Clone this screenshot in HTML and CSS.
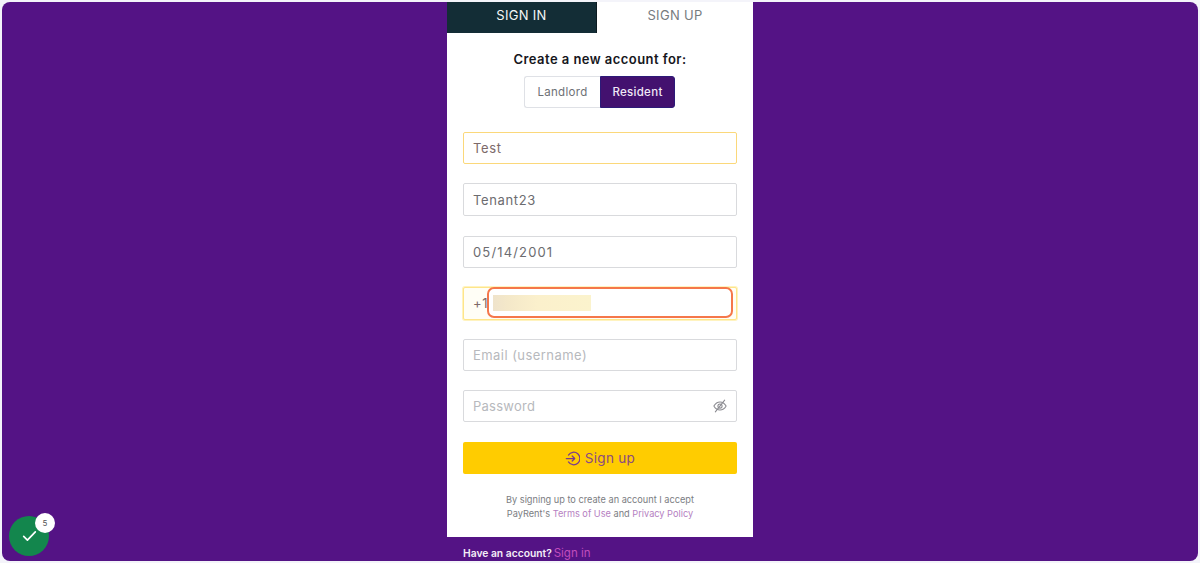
FILE: index.html
```html
<!DOCTYPE html>
<html lang="en">
<head>
<meta charset="utf-8">
<title>PayRent Sign up</title>
<link rel="stylesheet" href="styles.css">
</head>
<body>
<div class="panel">
  <main class="card">
    <nav class="tabs">
      <div class="tab tab-active">SIGN IN</div>
      <div class="tab">SIGN UP</div>
    </nav>
    <section class="body">
      <h1 class="title">Create a new account for:</h1>
      <div class="toggle">
        <div class="opt">Landlord</div>
        <div class="opt opt-on">Resident</div>
      </div>
      <form class="fields">
        <div class="field field-auto"><span class="val">Test</span></div>
        <div class="field"><span class="val">Tenant23</span></div>
        <div class="field"><span class="val val-date">05/14/2001</span></div>
        <div class="field field-auto field-phone">
          <span class="val">+1</span>
          <span class="blur"></span>
          <span class="mark"></span>
        </div>
        <div class="field"><span class="ph ph-email">Email (username)</span></div>
        <div class="field field-pw">
          <span class="ph">Password</span>
          <svg class="eye" width="14" height="14" viewBox="0 0 24 24" fill="none" stroke="#8a8a90" stroke-width="1.8" stroke-linecap="round" stroke-linejoin="round">
            <path d="M1.5 12S5.5 5 12 5s10.500 7 10.500 7-4 7-10.500 7S1.500 12 1.500 12Z"/>
            <circle cx="12" cy="12" r="3.600"/>
            <path d="M4 22 20 2"/>
          </svg>
        </div>
        <button class="submit" type="button">
          <svg width="15" height="15" viewBox="0 0 24 24" fill="none" stroke="#7a3b8c" stroke-width="2" stroke-linecap="round" stroke-linejoin="round">
            <path d="M5.500 6.500A10 10 0 1 1 5.500 17.500"/>
            <path d="M2 12h13"/>
            <path d="M11.500 8l4 4-4 4"/>
          </svg>
          <span>Sign up</span>
        </button>
      </form>
      <p class="terms">By signing up to create an account I accept<br>PayRent's <a class="link">Terms of Use</a> and <a class="link">Privacy Policy</a></p>
    </section>
  </main>
  <p class="have"><b>Have an account?</b> <a class="signin">Sign in</a></p>
  <div class="badge">
    <svg width="15" height="12" viewBox="0 0 18 14" fill="none" stroke="#fff" stroke-width="2" stroke-linecap="round" stroke-linejoin="round"><path d="M2 7.500 6.500 12 16 2"/></svg>
    <span class="count">5</span>
  </div>
</div>
</body>
</html>
```
FILE: styles.css
```css
* { box-sizing: border-box; }
html, body { margin: 0; height: 100%; }
body {
  padding: 2px;
  background: #f4f4fa;
  font-family: "Inter", "Open Sans", sans-serif;
  overflow: hidden;
}
.panel {
  position: relative;
  height: 559px;
  background: #541385;
  border-radius: 8px;
  overflow: hidden;
  display: flex;
  flex-direction: column;
  align-items: center;
}
.card {
  width: 306px;
  height: 535px;
  background: #fff;
  flex: none;
}
.tabs { display: flex; height: 31px; }
.tab {
  flex: 1;
  display: flex;
  align-items: center;
  justify-content: center;
  font-size: 13px;
  letter-spacing: .3px;
  padding-bottom: 5px;
  color: #777c80;
}
.tab-active {
  flex: none;
  width: 150px;
  background: #132d36;
  color: #f4f7f7;
  border-right: 1px solid #0c1a20;
}
.body { padding: 0 16px; display: flex; flex-direction: column; align-items: center; }
.title {
  margin: 18px 0 0;
  font-size: 13px;
  line-height: 16px;
  font-weight: 600;
  letter-spacing: .45px;
  color: #16161c;
}
.toggle {
  display: flex;
  margin: 9px 1px 0 0;
  height: 32px;
  width: 151px;
  font-size: 11.500px;
  letter-spacing: .3px;
}
.opt {
  flex: 1;
  display: flex;
  align-items: center;
  justify-content: center;
  color: #6e7176;
  border: 1px solid #dfe1e6;
  border-right: 0;
  border-radius: 3px 0 0 3px;
}
.opt-on {
  flex: none;
  width: 75px;
  background: #43116f;
  color: #f0e9f6;
  font-weight: 500;
  border: 1px solid #2c1a78;
  border-radius: 0 3px 3px 0;
}
.fields {
  width: 100%;
  margin-top: 24px;
  display: grid;
  grid-template-rows: 32px 33px 32px 33px 32px 32px 32px;
  row-gap: 19.250px;
}
.field {
  position: relative;
  display: flex;
  align-items: center;
  padding: 0 9px;
  border: 1px solid #d9dadd;
  border-radius: 2px;
  font-size: 13px;
}
.field-auto { border-color: #fbd87a; }
.val { color: #6c6c70; letter-spacing: .65px; }
.val-date { letter-spacing: 1.150px; }
.field-auto > .val:first-child { color: #7d6a6a; }
.ph { color: #b7b9bd; letter-spacing: .25px; }
.ph-email { letter-spacing: .45px; }
.field-phone { background: #fffef6; border-color: #fee58a; box-shadow: 0 0 0 1px #fff3bf; }
.field-pw { justify-content: space-between; padding-right: 9px; }
.blur {
  position: absolute;
  left: 29px;
  top: 7px;
  width: 98px;
  height: 16px;
  background: linear-gradient(90deg, #efe3cb 0, #f4e8c9 15%, #fbf0cc 45%, #fbf3cd 100%);
  z-index: 2;
}
.mark {
  position: absolute;
  left: 23px;
  top: -1px;
  width: 246px;
  height: 31px;
  background: #fff;
  border: 2px solid #f5774a;
  border-radius: 7px;
  z-index: 1;
}
.submit {
  margin: 0;
  height: 32px;
  border: 0;
  border-radius: 2px;
  background: #ffcc00;
  display: flex;
  align-items: center;
  justify-content: center;
  gap: 5px;
  padding: 1px 0 0;
  font: inherit;
  font-size: 13.500px;
  letter-spacing: .3px;
  color: #8a4a82;
}
.terms {
  margin: 19px 0 0;
  font-size: 9.200px;
  line-height: 14px;
  text-align: center;
  color: #7b7d82;
}
.link { color: #b67fc2; }
.have {
  width: 306px;
  margin: 8px 0 0;
  padding-left: 16px;
  font-size: 10.300px;
  line-height: 16px;
  color: #f3edf7;
}
.have b { font-weight: 600; }
.signin { color: #c14dbd; font-size: 11.500px; margin-left: -1px; }
.badge {
  position: absolute;
  left: 7px;
  top: 514px;
  width: 40px;
  height: 40px;
  border-radius: 50%;
  background: #13864d;
  display: flex;
  align-items: center;
  justify-content: center;
}
.count {
  position: absolute;
  left: 26px;
  top: -3px;
  width: 20px;
  height: 20px;
  border-radius: 50%;
  background: #fff;
  color: #555;
  font-size: 8px;
  display: flex;
  align-items: center;
  justify-content: center;
}
```
